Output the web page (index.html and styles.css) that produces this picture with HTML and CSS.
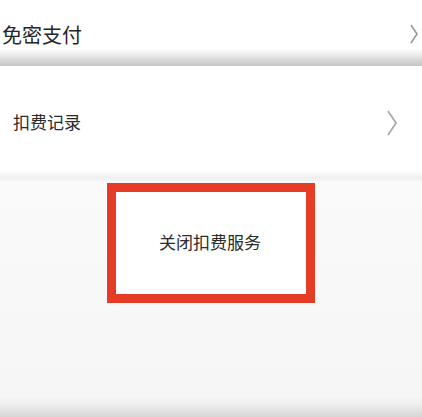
FILE: index.html
```html
<!DOCTYPE html>
<html lang="zh">
<head>
<meta charset="utf-8">
<link rel="stylesheet" href="styles.css">
</head>
<body>
<div class="page">
  <div class="row row-first">
    <span class="label label-big">免密支付</span>
    <svg class="chev chev-1" width="10" height="20" viewBox="0 0 10 20"><polyline points="2,1 8,10 2,19" fill="none" stroke="#999" stroke-width="1.6"/></svg>
  </div>
  <div class="shade"></div>
  <div class="row row-second">
    <span class="label label-mid">扣费记录</span>
    <svg class="chev chev-2" width="12" height="26" viewBox="0 0 12 26"><polyline points="2,1 10,13 2,25" fill="none" stroke="#aaa" stroke-width="1.8"/></svg>
  </div>
  <div class="band"></div>
  <div class="action">
    <div class="highlight">
      <span class="action-text">关闭扣费服务</span>
    </div>
  </div>
  <div class="bottom-shade"></div>
</div>
</body>
</html>
```
FILE: styles.css
```css
html, body {
  margin: 0;
  padding: 0;
  background: #f6f6f6;
}
.page {
  width: 422px;
  height: 417px;
  overflow: hidden;
  font-family: "Noto Sans CJK SC", "Noto Sans", sans-serif;
  color: #262626;
  display: flex;
  flex-direction: column;
}
.row {
  background: #fff;
  display: flex;
  align-items: center;
  justify-content: space-between;
}
.row-first {
  height: 48px;
  padding: 0 3px 0 2px;
  align-items: flex-start;
}
.label-big {
  font-size: 20px;
  line-height: 20px;
  margin-top: 25px;
}
.chev-1 {
  margin-top: 24px;
}
.shade {
  height: 18px;
  background: linear-gradient(#ffffff 0%, #eeeeee 35%, #d2d2d2 75%, #c6c6c6 100%);
}
.row-second {
  height: 106px;
  padding: 0 24px 0 13px;
  align-items: flex-start;
}
.label-mid {
  font-size: 17px;
  line-height: 17px;
  margin-top: 47px;
  color: #2c2c2c;
}
.chev-2 {
  margin-top: 44px;
}
.band {
  height: 9px;
  background: linear-gradient(#fbfbfb, #f0f0f0 60%, #f4f4f4);
}
.action {
  height: 215px;
  background: linear-gradient(#fafafa 0%, #f8f8f8 50%, #f6f6f6 100%);
  display: flex;
  justify-content: center;
  align-items: flex-start;
}
.highlight {
  margin-top: 2px;
  width: 190px;
  height: 102px;
  border: 9px solid #e63b24;
  background: #fff;
  display: flex;
  justify-content: center;
  align-items: center;
}
.action-text {
  font-size: 17px;
  line-height: 17px;
  color: #2c2c2c;
  margin-left: -2px;
  margin-top: -4px;
}
.bottom-shade {
  flex: 1;
  background: linear-gradient(#f6f6f6, #eeeeee 40%, #d6d6d6 100%);
}
```
